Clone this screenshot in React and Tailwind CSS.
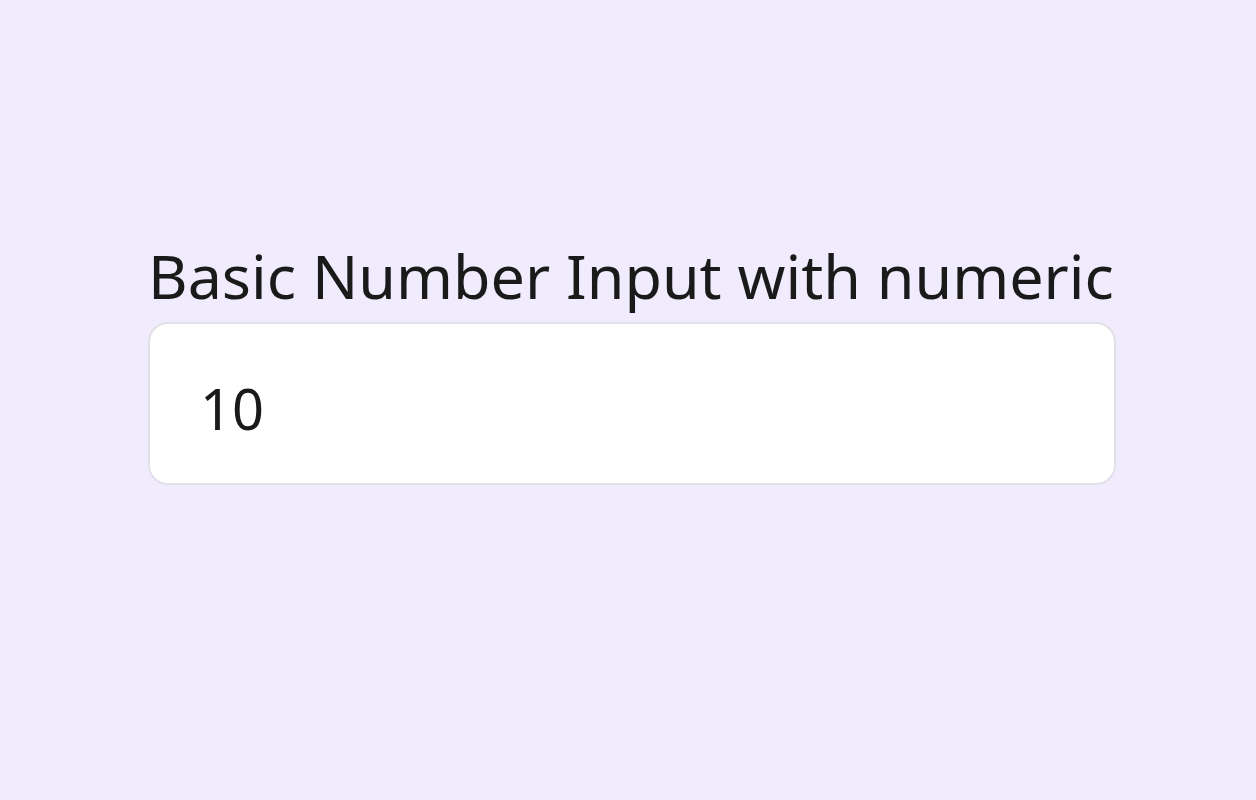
export default function App() {
  return (
    <div className="min-h-[800px] w-full bg-[#f0ebfd] pl-[148px] pt-[236px]" style={{ fontFamily: '"Noto Sans", "Open Sans", sans-serif' }}>
      <div className="flex w-[968px] flex-col gap-[6px]">
        <label htmlFor="num" className="text-[61px] leading-[80px] text-[#1a1a1a] whitespace-nowrap">
          Basic Number Input with numeric
        </label>
        <input
          id="num"
          type="text"
          inputMode="numeric"
          defaultValue="10"
          className="h-[163px] w-full rounded-[20px] border-[2px] border-[#e2e0e8] bg-white pl-[50px] pt-[8px] text-[56px] text-[#1a1a1a] outline-none"
        />
      </div>
    </div>
  );
}
